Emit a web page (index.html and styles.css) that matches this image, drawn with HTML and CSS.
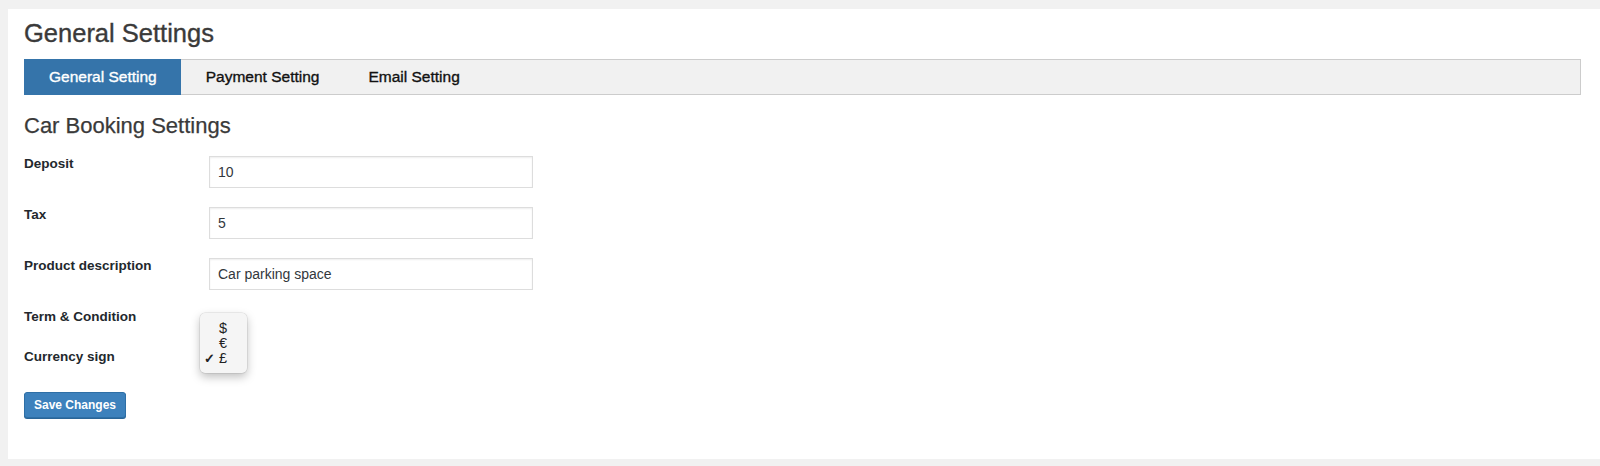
FILE: index.html
```html
<!DOCTYPE html>
<html lang="en">
<head>
    <meta charset="UTF-8">
    <meta name="viewport" content="width=device-width, initial-scale=1.0">
    <title>General Settings</title>
    <link rel="stylesheet" href="styles.css">
</head>
<body>
    <div class="wrap">
        <h1>General Settings</h1>

        <nav class="nav-tabs">
            <a class="nav-tab active" href="#">General Setting</a>
            <a class="nav-tab" href="#">Payment Setting</a>
            <a class="nav-tab" href="#">Email Setting</a>
        </nav>

        <h2>Car Booking Settings</h2>

        <form class="form-table">
            <div class="row">
                <label for="deposit">Deposit</label>
                <input type="text" id="deposit" value="10">
            </div>
            <div class="row">
                <label for="tax">Tax</label>
                <input type="text" id="tax" value="5">
            </div>
            <div class="row">
                <label for="desc">Product description</label>
                <input type="text" id="desc" value="Car parking space">
            </div>
            <div class="row row-empty">
                <label>Term &amp; Condition</label>
            </div>
            <div class="row row-select">
                <label>Currency sign</label>
                <div class="field">
                    <!-- open native select menu -->
                    <ul class="select-menu">
                        <li>$</li>
                        <li>€</li>
                        <li class="checked">£</li>
                    </ul>
                </div>
            </div>
            <button type="button" class="button-primary">Save Changes</button>
        </form>
    </div>
</body>
</html>
```

FILE: styles.css
```css
body {
    margin: 0;
    padding: 0;
    background: #f1f1f1;
    font-family: "Liberation Sans", Arial, sans-serif;
    color: #23282d;
}
.wrap {
    background: #fff;
    margin: 9px 0 0 8px;
    height: 450px;
    padding: 0 19px 0 16px;
    box-sizing: border-box;
}
h1 {
    margin: 0;
    padding-top: 8px;
    font-size: 25.5px;
    line-height: 33px;
    font-weight: 400;
    color: #3a3a3a;
    -webkit-text-stroke: 0.35px #3a3a3a;
}
.nav-tabs {
    display: flex;
    margin-top: 9px;
    height: 34px;
    border: 1px solid #ccc;
    background: #f1f1f1;
}
.nav-tab {
    display: flex;
    align-items: center;
    padding: 0 24px 0 25px;
    font-size: 15.5px;
    color: #111;
    -webkit-text-stroke: 0.35px #111;
    text-decoration: none;
}
.nav-tab.active {
    background: #3574aa;
    color: #fff;
    -webkit-text-stroke: 0.35px #fff;
    margin: -1px 0 -1px -1px;
    padding: 0 24px 0 25px;
}
h2 {
    margin: 17px 0 0;
    font-size: 22px;
    line-height: 28px;
    font-weight: 400;
    color: #3a3a3a;
    -webkit-text-stroke: 0.25px #3a3a3a;
}
.form-table {
    display: flex;
    flex-direction: column;
    align-items: flex-start;
    gap: 17px;
    margin-top: 14px;
}
.row {
    display: flex;
    align-items: flex-start;
}
.row label {
    width: 185px;
    padding-top: 1px;
    font-size: 13.5px;
    font-weight: 700;
    line-height: 18px;
    color: #23282d;
}
.row input {
    margin-top: 2px;
    width: 324px;
    height: 32px;
    box-sizing: border-box;
    padding: 0 8px;
    border: 1px solid #ddd;
    box-shadow: inset 0 1px 2px rgba(0, 0, 0, 0.07);
    font-family: "Liberation Sans", Arial, sans-serif;
    font-size: 14px;
    color: #32373c;
}
.row-empty {
    min-height: 23px;
}
.field {
    position: relative;
    width: 60px;
    height: 20px;
}
.select-menu {
    position: absolute;
    left: -9px;
    top: -34px;
    width: 47px;
    margin: 0;
    padding: 7.5px 0;
    list-style: none;
    background: #f5f5f5;
    border-radius: 5px;
    box-shadow: 0 0 0 0.5px rgba(0, 0, 0, 0.12), 0 4px 10px rgba(0, 0, 0, 0.25);
    box-sizing: border-box;
}
.select-menu li {
    position: relative;
    padding-left: 19px;
    font-size: 14.5px;
    line-height: 15px;
    color: #222;
}
.select-menu li.checked::before {
    content: "✓";
    position: absolute;
    left: 4px;
    font-size: 13px;
    font-weight: 700;
}
.button-primary {
    margin-top: 8px;
    height: 26px;
    padding: 0 9px;
    border: 1px solid #2e6fa6;
    border-radius: 3px;
    background: #3d81bc;
    box-shadow: 0 1px 0 #2a6597;
    color: #fff;
    font-family: "Liberation Sans", Arial, sans-serif;
    font-size: 12px;
    font-weight: 700;
    cursor: pointer;
}
```
